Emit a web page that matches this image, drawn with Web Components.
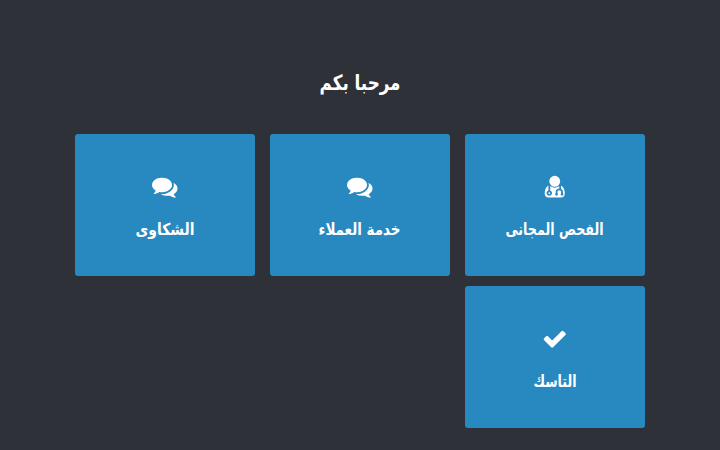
<!DOCTYPE html>
<html lang="ar" dir="rtl">
<head>
<meta charset="utf-8">
<title>مرحبا بكم</title>
<style>
  body {
    margin: 0;
    background: #2e3138;
  }
</style>
</head>
<body>
<welcome-page>
  <fit-text slot="title" size="21" width="81">مرحبا بكم</fit-text>
  <menu-card icon="doctor"><fit-text size="16.5" width="98">الفحص المجانى</fit-text></menu-card>
  <menu-card icon="comments"><fit-text size="16.5" width="82">خدمة العملاء</fit-text></menu-card>
  <menu-card icon="comments"><fit-text size="16.5" width="59">الشكاوى</fit-text></menu-card>
  <menu-card icon="check"><fit-text size="16.5" width="43">التاسك</fit-text></menu-card>
</welcome-page>

<script>
const ICONS = {
  check: 'M1671 566q0 40-28 68l-724 724-136 136q-28 28-68 28t-68-28l-136-136-362-362q-28-28-28-68t28-68l136-136q28-28 68-28t68 28l294 295 656-657q28-28 68-28t68 28l136 136q28 28 28 68z',
  comments: 'M1408 768q0 139-94 257t-256.5 186.5-353.5 68.5q-86 0-176-16-124 88-278 128-36 9-86 16h-3q-11 0-20.5-8t-11.5-21q-1-3-1-6.5t.5-6.5 2-6l2.5-5 3.5-5.5 4-5 4.5-5 4-4.5q5-6 23-25t26-29.5 22.5-29 25-38.5 20.5-44q-124-72-195-177t-71-224q0-139 94-257t256.5-186.5 353.5-68.5 353.5 68.5 256.5 186.5 94 257zm384 256q0 120-71 224.5t-195 176.5q10 24 20.5 44t25 38.5 22.5 29 26 29.5 23 25q1 1 4 4.5t4.5 5 4 5 3.5 5.5l2.5 5 2 6 .5 6.5-1 6.5q-3 14-13 22t-22 7q-50-7-86-16-154-40-278-128-90 16-176 16-271 0-472-132 58 4 88 4 161 0 309-45t264-129q125-92 192-212t67-254q0-77-23-152 129 71 204 178t75 230z',
  doctor: 'M576 1344q0 26-19 45t-45 19-45-19-19-45 19-45 45-19 45 19 19 45zm1024 51q0 121-73 191t-194 70h-874q-121 0-194-70t-73-191q0-68 5.5-131t24-138 47.5-132.5 81-103 120-60.5q-22 52-22 120v203q-58 20-93 70t-35 111q0 80 56 136t136 56 136-56 56-136q0-61-35.5-111t-92.5-70v-203q0-62 25-93 132 104 295 104t295-104q25 31 25 93v64q-106 0-181 75t-75 181v89q-32 29-32 71 0 40 28 68t68 28 68-28 28-68q0-42-32-71v-89q0-52 38-90t90-38 90 38 38 90v89q-32 29-32 71 0 40 28 68t68 28 68-28 28-68q0-42-32-71v-89q0-68-34.5-127.5t-93.5-93.5q0-10 .5-42.5t0-48-2.5-41.5-7-47-13-40q68 15 120 60.5t81 103 47.5 132.5 24 138 5.5 131zm-320-883q0 159-112.5 271.5t-271.5 112.5-271.5-112.5-112.5-271.5 112.5-271.5 271.5-112.5 271.5 112.5 112.5 271.5z',
};

// One line of text set to a fixed width
class FitText extends HTMLElement {
  constructor() {
    super();
    this.attachShadow({ mode: 'open' });
  }

  static get styles() {
    return /* css */`
    :host {
      display: block;
      line-height: 0;
    }

    svg {
      overflow: visible;
    }

    text {
      fill: #fff;
      font-family: "DejaVu Sans", sans-serif;
      font-weight: bold;
      text-anchor: middle;
      direction: rtl;
    }
  `;
  }

  connectedCallback() {
    const size = this.getAttribute('size');
    const width = this.getAttribute('width');
    this.shadowRoot.innerHTML = /* html */`
    <style>${FitText.styles}</style>
    <svg width="${width}" height="24">
      <text x="${width / 2 - .5}" y="18" font-size="${size}" textLength="${width}" lengthAdjust="spacingAndGlyphs">${this.textContent}</text>
    </svg>`;
  }
}

class MenuCard extends HTMLElement {
  constructor() {
    super();
    this.attachShadow({ mode: 'open' });
  }

  static get styles() {
    return /* css */`
    :host {
      display: flex;
      flex-direction: column;
      align-items: center;
      gap: 17px;
      box-sizing: border-box;
      height: 142px;
      padding-top: 40px;
      border-radius: 3px;
      background: #2889c0;
    }

    .icon {
      width: 25.5px;
      height: 25.5px;
      fill: #fff;
    }
  `;
  }

  connectedCallback() {
    this.shadowRoot.innerHTML = /* html */`
    <style>${MenuCard.styles}</style>
    <svg class="icon" viewBox="0 0 1792 1792"><path d="${ICONS[this.getAttribute('icon')]}"/></svg>
    <slot></slot>`;
  }
}

class WelcomePage extends HTMLElement {
  constructor() {
    super();
    this.attachShadow({ mode: 'open' });
  }

  static get styles() {
    return /* css */`
    :host {
      display: block;
      box-sizing: border-box;
      height: 450px;
      padding-top: 72px;
    }

    header {
      display: flex;
      justify-content: center;
      margin-bottom: 38.4px;
    }

    main {
      display: grid;
      grid-template-columns: repeat(3, 180px);
      justify-content: center;
      gap: 10px 15px;
    }
  `;
  }

  connectedCallback() {
    this.shadowRoot.innerHTML = /* html */`
    <style>${WelcomePage.styles}</style>
    <header><slot name="title"></slot></header>
    <main><slot></slot></main>`;
  }
}

customElements.define('fit-text', FitText);
customElements.define('menu-card', MenuCard);
customElements.define('welcome-page', WelcomePage);
</script>
</body>
</html>
